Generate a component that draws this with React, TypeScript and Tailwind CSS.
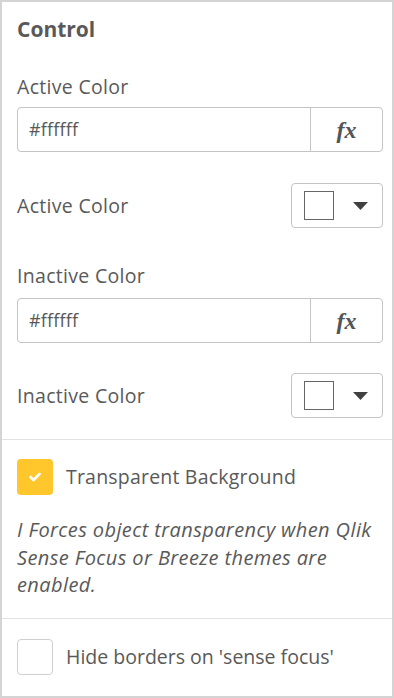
const font = { fontFamily: '"Open Sans", "Liberation Sans", sans-serif' };

function FxInput({ value }: { value: string }) {
  return (
    <div className="flex h-[45px] w-full rounded-[4px] border border-[#c4c4c4] bg-white">
      <div className="flex flex-1 items-center pl-[11px] text-[18px] tracking-[0.2px] text-[#595959]">{value}</div>
      <div className="flex w-[72px] items-center justify-center border-l border-[#c4c4c4]">
        <span
          className="text-[24px] font-bold italic leading-none text-[#555555]"
          style={{ fontFamily: '"Liberation Serif", "DejaVu Serif", serif' }}
        >
          fx
        </span>
      </div>
    </div>
  );
}

function ColorRow({ label }: { label: string }) {
  return (
    <div className="flex h-[45px] items-center justify-between">
      <span className="text-[19.5px] tracking-[0.3px] text-[#595959]">{label}</span>
      <button className="flex h-[45px] w-[92px] shrink-0 items-center rounded-[4px] border border-[#c4c4c4] bg-white pl-[12px]">
        <span className="h-[29px] w-[30px] border border-[#666666] bg-white" />
        <svg className="ml-[19px]" width="15" height="8" viewBox="0 0 15 8">
          <path d="M0 0 H15 L7.5 8 Z" fill="#404040" />
        </svg>
      </button>
    </div>
  );
}

export default function App() {
  return (
    <div
      className="h-[698px] w-[394px] overflow-hidden border-2 border-[#d4d4d4] bg-white"
      style={font}
    >
      {/* Colours */}
      <div className="pb-[21px] pl-[15px] pr-[9px] pt-[13px]">
        <h2 className="text-[21px] font-bold leading-[28px] text-[#595959]">Control</h2>

        <div className="mt-[32px] text-[19.5px] leading-[24px] tracking-[0.3px] text-[#595959]">Active Color</div>
        <div className="mt-[8px]">
          <FxInput value="#ffffff" />
        </div>
        <div className="mt-[31px]">
          <ColorRow label="Active Color" />
        </div>

        <div className="mt-[36px] text-[19.5px] leading-[24px] tracking-[0.3px] text-[#595959]">Inactive Color</div>
        <div className="mt-[10px]">
          <FxInput value="#ffffff" />
        </div>
        <div className="mt-[30px]">
          <ColorRow label="Inactive Color" />
        </div>
      </div>

      {/* Transparent background */}
      <div className="border-t border-[#e2e2e2] pb-[19px] pl-[15px] pr-[9px] pt-[19px]">
        <label className="flex items-center gap-[13px]">
          <span className="flex h-[36px] w-[36px] items-center justify-center rounded-[4px] bg-[#ffc72c]">
            <svg width="12" height="10" viewBox="0 0 12 10">
              <path d="M1.5 5 L4.5 8 L10.5 2" stroke="#ffffff" strokeWidth="2.6" fill="none" strokeLinecap="round" strokeLinejoin="round" />
            </svg>
          </span>
          <span className="text-[19.5px] tracking-[0.2px] text-[#595959]">Transparent Background</span>
        </label>
        <p className="mt-[21px] whitespace-nowrap text-[20px] italic leading-[27.5px] tracking-[0.4px] text-[#595959]">
          I Forces object transparency when Qlik
          <br />
          Sense Focus or Breeze themes are
          <br />
          enabled.
        </p>
      </div>

      {/* Borders */}
      <div className="border-t border-[#e2e2e2] pl-[15px] pr-[9px] pt-[20px]">
        <label className="flex items-center gap-[13px]">
          <span className="h-[36px] w-[36px] rounded-[4px] border border-[#cfcfcf] bg-white" />
          <span className="text-[19.5px] text-[#595959]">Hide borders on 'sense focus'</span>
        </label>
      </div>
    </div>
  );
}
